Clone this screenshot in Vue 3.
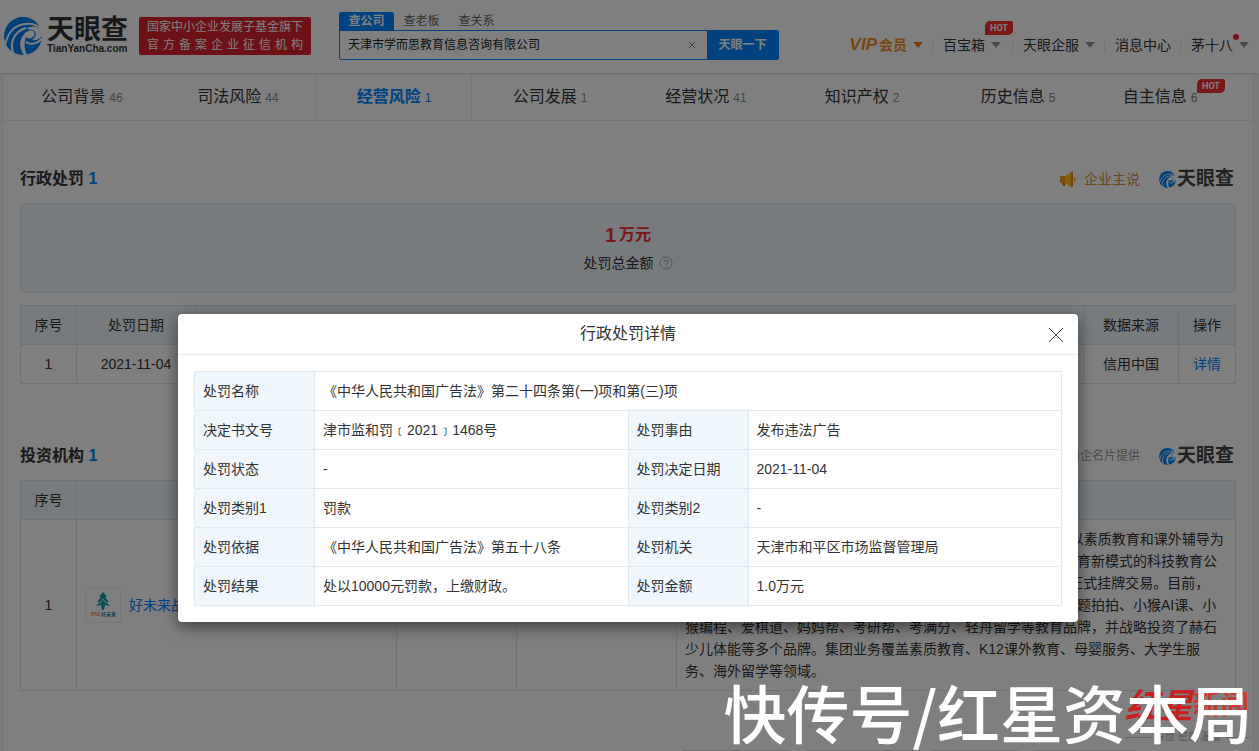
<script setup>
import { ref } from 'vue'

const query = ref('天津市学而思教育信息咨询有限公司')

const tabs = [
  { name: '公司背景', count: 46 },
  { name: '司法风险', count: 44 },
  { name: '经营风险', count: 1, active: true },
  { name: '公司发展', count: 1 },
  { name: '经营状况', count: 41 },
  { name: '知识产权', count: 2 },
  { name: '历史信息', count: 5 },
  { name: '自主信息', count: 6, hot: true }
]

const nav = [
  { name: '百宝箱', caret: true, hot: true },
  { name: '天眼企服', caret: true },
  { name: '消息中心' },
  { name: '茅十八', caret: true, dot: true }
]

const details = [
  ['决定书文号', '津市监和罚﹝2021﹞1468号', '处罚事由', '发布违法广告'],
  ['处罚状态', '-', '处罚决定日期', '2021-11-04'],
  ['处罚类别1', '罚款', '处罚类别2', '-'],
  ['处罚依据', '《中华人民共和国广告法》第五十八条', '处罚机关', '天津市和平区市场监督管理局'],
  ['处罚结果', '处以10000元罚款，上缴财政。', '处罚金额', '1.0万元']
]

const intro = [
  '好未来（NYSE：TAL）是一家以智慧教育和开放平台为主体，以素质教育和课外辅导为',
  '载体，在全球范围内服务公办教育，助力民办教育，探索未来教育新模式的科技教育公',
  '司。2010年10月20日，好未来集团于美国纽约证券交易所主板正式挂牌交易。目前，',
  '集团旗下有学而思、学而思网校、学而思国际、励步、爱智康、题拍拍、小猴AI课、小',
  '猴编程、爱棋道、妈妈帮、考研帮、考满分、轻舟留学等教育品牌，并战略投资了赫石',
  '少儿体能等多个品牌。集团业务覆盖素质教育、K12课外教育、母婴服务、大学生服',
  '务、海外留学等领域。'
]
</script>

<template>
  <div class="page">
    <svg class="defs" aria-hidden="true">
      <symbol id="swirl" viewBox="0 0 38 38">
        <circle cx="19" cy="19" r="19" fill="#0080f0" />
        <g fill="none" stroke="#fff">
          <path d="M1 28C4 15 11 8 21 7C28 6 34 8 38 13" stroke-width="2" />
          <path d="M10 38C5 27 9 15 22 11" stroke-width="2" />
          <path d="M22 25C27 29 34 26 39 21" stroke-width="2" />
        </g>
        <path d="M22 12C27 8 34 9 38 14L38 19C36 22 32 24 28 23C33 20 33 14 28 13C26 12 24 12 22 12Z" fill="#fff" />
        <path d="M24 14C28 12 32 15 30 19C28 22 24 22 22 20C20 25 20 31 23 38L20 38C14 30 15 19 24 14Z" fill="#fff" />
      </symbol>
    </svg>

    <header class="top">
      <a class="brand" href="#">
        <svg class="brand-mark"><use href="#swirl" /></svg>
        <span class="brand-words">
          <b>天眼查</b>
          <small>TianYanCha.com</small>
        </span>
      </a>
      <div class="cert">
        <span>国家中小企业发展子基金旗下</span>
        <span>官方备案企业征信机构</span>
      </div>
      <form class="search" @submit.prevent>
        <div class="kinds">
          <button type="button" class="kind on">查公司</button>
          <button type="button" class="kind">查老板</button>
          <button type="button" class="kind">查关系</button>
        </div>
        <div class="field">
          <input v-model="query" type="text" aria-label="查公司" />
          <button type="button" class="clear" aria-label="清除" @click="query = ''">
            <svg viewBox="0 0 8 8"><path d="M1 1L7 7M7 1L1 7" /></svg>
          </button>
          <button class="go">天眼一下</button>
        </div>
      </form>
      <nav class="nav">
        <a href="#" class="vip"><span><i>VIP</i>会员</span><span class="caret"></span></a>
        <a v-for="n in nav" :key="n.name" href="#">
          <span class="nav-label">{{ n.name }}<span v-if="n.dot" class="dot"></span></span>
          <span v-if="n.caret" class="caret"></span>
          <em v-if="n.hot" class="hot">HOT</em>
        </a>
      </nav>
    </header>

    <main class="sheet">
      <nav class="tabs">
        <a v-for="t in tabs" :key="t.name" href="#" :class="{ active: t.active, flagged: t.hot }">
          <span>{{ t.name }}</span><small>{{ t.count }}</small>
          <em v-if="t.hot" class="hot">HOT</em>
        </a>
      </nav>

      <section class="block penalty">
        <div class="head">
          <h2>行政处罚 <b>1</b></h2>
          <a class="say" href="#">
            <svg viewBox="0 0 16 16">
              <path d="M0 5H5V12H0Z" fill="#f0a020" />
              <path d="M5 5L11 1V16L5 12Z" fill="#ffc020" />
              <path d="M11 1L13 0V16L11 16Z" fill="#d88818" />
              <path d="M14 6Q17 8 14 11Z" fill="#f0a020" />
              <path d="M2 12H5V15H3Z" fill="#c87a18" />
            </svg>
            企业主说
          </a>
          <span class="stamp"><svg><use href="#swirl" /></svg>天眼查</span>
        </div>
        <div class="total">
          <p class="sum"><b>1</b>万元</p>
          <p class="sum-label">处罚总金额
            <svg viewBox="0 0 14 14"><circle cx="7" cy="7" r="6" /><path d="M5 6Q5 4 7 4T9 6Q9 7 7 8V9M7 10V11" /></svg>
          </p>
        </div>
        <table class="grid">
          <colgroup><col class="c-no" /><col class="c-date" /><col /><col class="c-src" /><col class="c-op" /></colgroup>
          <thead><tr><th>序号</th><th>处罚日期</th><th></th><th>数据来源</th><th>操作</th></tr></thead>
          <tbody><tr><td>1</td><td>2021-11-04</td><td></td><td>信用中国</td><td><a href="#">详情</a></td></tr></tbody>
        </table>
      </section>

      <section class="block investor">
        <div class="head">
          <h2>投资机构 <b>1</b></h2>
          <span class="source">本数据由企名片提供</span>
          <span class="stamp"><svg><use href="#swirl" /></svg>天眼查</span>
        </div>
        <table class="grid">
          <colgroup><col class="c-no" /><col class="c-org" /><col class="c-a" /><col class="c-b" /><col /></colgroup>
          <thead><tr><th>序号</th><th></th><th></th><th></th><th></th></tr></thead>
          <tbody>
            <tr>
              <td>1</td>
              <td>
                <a class="org" href="#">
                  <span class="org-logo">
                    <svg viewBox="0 0 16 18">
                      <path d="M8 0L12 5H10L14 10H11L15 14L10 13L9 18H7L6 13L1 14L5 10H2L6 5H4Z" fill="#169aaa" />
                      <path d="M8 7L5 11M8 7L11 11" stroke="#eee" />
                    </svg>
                    <span><i>TAL</i>好未来</span>
                  </span>
                  好未来战略投资
                </a>
              </td>
              <td></td>
              <td></td>
              <td class="intro"><span v-for="line in intro" :key="line">{{ line }}</span></td>
            </tr>
          </tbody>
        </table>
        <div class="pills"><span></span><span></span><span></span><span></span></div>
      </section>
    </main>

    <div class="mask">
      <div class="modal" role="dialog" aria-labelledby="modal-title">
        <div class="modal-head">
          <h3 id="modal-title">行政处罚详情</h3>
          <button type="button" aria-label="关闭">
            <svg viewBox="0 0 14 14"><path d="M0 0L14 14M14 0L0 14" /></svg>
          </button>
        </div>
        <div class="modal-body">
          <table class="detail">
            <colgroup><col class="k" /><col /><col class="k" /><col /></colgroup>
            <tbody>
              <tr><th>处罚名称</th><td colspan="3">《中华人民共和国广告法》第二十四条第(一)项和第(三)项</td></tr>
              <tr v-for="r in details" :key="r[0]">
                <th>{{ r[0] }}</th><td>{{ r[1] }}</td><th>{{ r[2] }}</th><td>{{ r[3] }}</td>
              </tr>
            </tbody>
          </table>
        </div>
      </div>
    </div>

    <div class="press">
      <div class="press-name"><i>红星</i><b>新闻</b></div>
      <div class="press-motto"><span>深度 密度 温度</span></div>
    </div>
    <div class="credit">快传号/红星资本局</div>
  </div>
</template>

<style>
html, body { margin: 0; background: #f4f4f4; }
</style>

<style scoped>
* { box-sizing: border-box; }
.page {
  position: relative;
  height: 100vh;
  min-height: 600px;
  overflow: hidden;
  display: flex;
  flex-direction: column;
  font: 14px/22px "Liberation Sans", "Noto Sans CJK SC", sans-serif;
  color: #333;
}
.defs { position: absolute; width: 0; height: 0; }
a { color: #0084ff; text-decoration: none; }
button { font: inherit; border: 0; padding: 0; background: none; cursor: pointer; }
h2, h3, p { margin: 0; }
em { font-style: normal; }

.top {
  flex: none;
  display: flex;
  align-items: flex-start;
  height: 73px;
  padding: 0 10px 0 4px;
  background: #fff;
  box-shadow: 0 1px 3px rgba(0, 0, 0, .12);
  position: relative;
}
.brand { display: flex; gap: 5px; margin-top: 17px; color: #333; white-space: nowrap; }
.brand-mark { width: 38px; height: 38px; }
.brand-words { display: flex; flex-direction: column; width: 80px; }
.brand-words b { font-size: 27px; line-height: 26px; }
.brand-words small { font-size: 10px; font-weight: bold; line-height: 12px; }
.cert {
  display: flex;
  flex-direction: column;
  width: 172px;
  height: 38px;
  margin: 17px 0 0 12px;
  padding: 1px 8px;
  border-radius: 2px;
  background: #d9232b;
  color: #fff;
  font-size: 12px;
  line-height: 18px;
  white-space: nowrap;
}
.cert span { text-align: justify; text-align-last: justify; }
.search { flex: 0 1 440px; margin: 12px 0 0 28px; font-size: 12px; }
.kinds { display: flex; }
.kind { width: 55px; height: 18px; line-height: 18px; color: #666; border-radius: 2px 2px 0 0; }
.kind.on { background: #0084ff; color: #fff; font-weight: bold; }
.field { display: flex; align-items: center; height: 30px; border: 1px solid #0084ff; border-radius: 0 2px 2px 2px; }
.field input { flex: 1; min-width: 0; border: 0; outline: 0; padding: 0 8px; font: inherit; color: #222; background: none; }
.clear { display: flex; margin-right: 11px; }
.clear svg { width: 8px; height: 8px; stroke: #888; fill: none; }
.go { width: 71px; height: 30px; background: #0084ff; color: #fff; font-weight: bold; }

.nav { display: flex; margin: 34px 0 0 auto; }
.nav a { position: relative; display: flex; align-items: center; gap: 6px; padding: 0 10px; color: #333; white-space: nowrap; }
.nav a:nth-child(2) { padding-right: 12px; }
.nav a:last-child { padding-right: 0; }
.nav a + a::before { content: ""; position: absolute; left: -1px; top: 6px; height: 12px; border-left: 1px solid #e4e4e4; }
.caret { border: 5px solid transparent; border-top: 6px solid #999; border-bottom: 0; }
.nav .vip { color: #f08a1c; font-weight: bold; }
.vip i { font-size: 17px; margin-right: 2px; }
.vip .caret { border-top-color: #f07a10; }
.nav-label { position: relative; }
.dot { position: absolute; top: 0; right: -6px; width: 6px; height: 6px; border-radius: 50%; background: #f5222d; }
.hot {
  position: absolute;
  width: 28px;
  height: 14px;
  border-radius: 5px 2px 5px 0;
  background: #f0302f;
  color: #fff;
  font: bold 9px/14px Roboto, sans-serif;
  text-align: center;
}
.nav .hot { top: -13px; right: 0; }

.sheet { flex: 1; margin: 1px 6px 0 3px; background: #fff; border: solid #ececec; border-width: 0 1px; }
.tabs { display: grid; grid-template-columns: repeat(8, 1fr); height: 47px; border-bottom: 1px solid #e8e8e8; }
.tabs a { position: relative; display: flex; justify-content: center; align-items: center; gap: 4px; color: #333; font-size: 16px; }
.tabs small { font-size: 12px; color: #888; padding-top: 2px; }
.tabs .active { border: solid #ececec; border-width: 0 1px; color: #0084ff; }
.tabs .active span { font-weight: bold; }
.tabs .active small { color: #0084ff; }
.tabs .flagged { padding-right: 28px; }
.tabs .hot { top: 5px; right: 27px; }

.block { padding: 0 16px; }
.penalty { padding-top: 43px; }
.investor { padding-top: 57px; }
.head { display: flex; align-items: center; height: 30px; }
.head h2 { font-size: 16px; line-height: 30px; margin-right: auto; }
.head h2 b { color: #0084ff; }
.say { display: flex; align-items: center; gap: 8px; color: #d98a3c; }
.say svg { width: 16px; height: 16px; }
.source { color: #999; font-size: 12px; }
.stamp { display: flex; align-items: center; gap: 1px; margin: 0 2px 0 19px; color: #444; font-size: 19px; font-weight: bold; }
.stamp svg { width: 17px; height: 17px; }
.total { height: 90px; margin: 9px 0 12px; padding-top: 18px; background: #eff6fc; border: 1px solid #dfeaf2; text-align: center; }
.sum { color: #f0302f; font-size: 16px; font-weight: bold; line-height: 26px; display: flex; justify-content: center; align-items: center; gap: 3px; }
.sum b { font-size: 20px; }
.sum-label { display: flex; justify-content: center; align-items: center; gap: 5px; margin-top: 4px; }
.sum-label svg { width: 14px; height: 14px; fill: none; stroke: #9ab0c8; }

table { width: 100%; border-collapse: collapse; table-layout: fixed; }
.grid th, .grid td { border: 1px solid #d8e7f0; padding: 8px; height: 39px; text-align: center; font-weight: normal; }
.grid th { background: #eff6fc; }
.investor .grid { margin-top: 9px; }
.c-no { width: 56px; }
.c-date { width: 119px; }
.c-src { width: 95px; }
.c-op { width: 57px; }
.c-org { width: 320px; }
.c-a { width: 120px; }
.c-b { width: 160px; }
.org { display: flex; align-items: center; gap: 8px; }
.org-logo { display: flex; flex-direction: column; align-items: center; width: 36px; height: 36px; padding-top: 4px; border: 1px solid #ececec; border-radius: 4px; color: #2a7ea8; }
.org-logo svg { width: 16px; height: 18px; fill: none; }
.org-logo span { font-size: 5px; font-weight: bold; line-height: 8px; white-space: nowrap; }
.org-logo i { color: #f08020; font-size: 6px; }
.grid .intro { text-align: left; }
.intro span { display: block; white-space: nowrap; }
.pills { display: flex; gap: 14px; margin: 59px 0 0 661px; }
.pills span { width: 111px; height: 30px; border: 1px solid #ddd; border-radius: 2px; }
.pills span:nth-child(3) { width: 87px; }
.pills span:nth-child(4) { width: 105px; }

.mask { position: absolute; inset: 0; padding: 314px 3px 0 0; background: rgba(0, 0, 0, .5); }
.modal { width: 900px; max-width: 100%; margin: 0 auto; background: #fff; border-radius: 4px; box-shadow: 0 5px 15px rgba(0, 0, 0, .5); }
.modal-head { position: relative; height: 41px; border-bottom: 1px solid #e8eaec; }
.modal-head h3 { font-size: 16px; font-weight: normal; line-height: 40px; text-align: center; }
.modal-head button { position: absolute; right: 15px; top: 14px; display: flex; }
.modal-head svg { width: 14px; height: 14px; stroke: #444; fill: none; overflow: visible; }
.modal-body { padding: 16px; }
.detail th, .detail td { height: 39px; padding: 0 8px; border: 1px solid #dfe9f0; text-align: left; font-weight: normal; }
.detail th { background: #eff6fc; }
.k { width: 120px; }

.press { position: absolute; right: 8px; bottom: 6px; width: 126px; }
.press-name { display: flex; align-items: center; line-height: 46px; color: #c9201f; white-space: nowrap; }
.press-name i { font-size: 34px; font-weight: bold; }
.press-name b { font-size: 28px; color: #cc3a30; }
.press-motto { display: flex; align-items: center; gap: 4px; font-size: 10px; line-height: 16px; color: #555; white-space: nowrap; }
.press-motto::before, .press-motto::after { content: ""; flex: 1; border-top: 1px solid #666; }
.credit { position: absolute; right: 7px; bottom: 4px; color: #fff; font-family: "Noto Sans CJK SC", sans-serif; font-size: 63px; font-weight: 500; line-height: 72px; white-space: nowrap; }
</style>
